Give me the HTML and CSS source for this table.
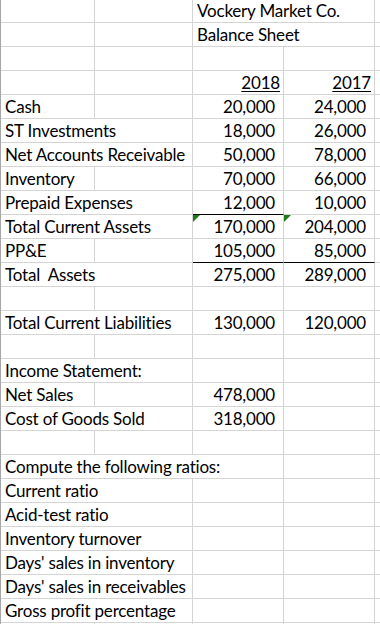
FILE: index.html
```html
<!DOCTYPE html>
<html>
<head>
<meta charset="utf-8">
<link rel="stylesheet" href="styles.css">
</head>
<body>
<div class="sheet">
  <div class="row"><div class="c"></div><div class="c"></div><div class="c s2">Vockery Market Co.</div><div class="c"></div></div>
  <div class="row"><div class="c"></div><div class="c"></div><div class="c s2">Balance Sheet</div><div class="c"></div></div>
  <div class="row"><div class="c"></div><div class="c"></div><div class="c"></div><div class="c"></div><div class="c"></div></div>
  <div class="row"><div class="c"></div><div class="c"></div><div class="c hd"><span class="u">2018</span></div><div class="c hd"><span class="u">2017</span></div><div class="c"></div></div>
  <div class="row"><div class="c">Cash</div><div class="c"></div><div class="c n">20,000</div><div class="c n">24,000</div><div class="c"></div></div>
  <div class="row"><div class="c s2">ST Investments</div><div class="c n">18,000</div><div class="c n">26,000</div><div class="c"></div></div>
  <div class="row"><div class="c s2">Net Accounts Receivable</div><div class="c n">50,000</div><div class="c n">78,000</div><div class="c"></div></div>
  <div class="row"><div class="c">Inventory</div><div class="c"></div><div class="c n">70,000</div><div class="c n">66,000</div><div class="c"></div></div>
  <div class="row"><div class="c s2">Prepaid Expenses</div><div class="c n bb">12,000</div><div class="c n">10,000</div><div class="c"></div></div>
  <div class="row"><div class="c s2">Total Current Assets</div><div class="c n tri">170,000</div><div class="c n tri">204,000</div><div class="c"></div></div>
  <div class="row"><div class="c">PP&amp;E</div><div class="c"></div><div class="c n bb">105,000</div><div class="c n bb">85,000</div><div class="c"></div></div>
  <div class="row"><div class="c s2">Total&nbsp; Assets</div><div class="c n">275,000</div><div class="c n">289,000</div><div class="c"></div></div>
  <div class="row"><div class="c"></div><div class="c"></div><div class="c"></div><div class="c"></div><div class="c"></div></div>
  <div class="row"><div class="c s2">Total Current Liabilities</div><div class="c n">130,000</div><div class="c n">120,000</div><div class="c"></div></div>
  <div class="row"><div class="c"></div><div class="c"></div><div class="c"></div><div class="c"></div><div class="c"></div></div>
  <div class="row"><div class="c s2">Income Statement:</div><div class="c"></div><div class="c"></div><div class="c"></div></div>
  <div class="row"><div class="c">Net Sales</div><div class="c"></div><div class="c n">478,000</div><div class="c"></div><div class="c"></div></div>
  <div class="row"><div class="c s2">Cost of Goods Sold</div><div class="c n">318,000</div><div class="c"></div><div class="c"></div></div>
  <div class="row"><div class="c"></div><div class="c"></div><div class="c"></div><div class="c"></div><div class="c"></div></div>
  <div class="row"><div class="c s3">Compute the following ratios:</div><div class="c"></div><div class="c"></div></div>
  <div class="row"><div class="c s2">Current ratio</div><div class="c"></div><div class="c"></div><div class="c"></div></div>
  <div class="row"><div class="c s2">Acid-test ratio</div><div class="c"></div><div class="c"></div><div class="c"></div></div>
  <div class="row"><div class="c s2">Inventory turnover</div><div class="c"></div><div class="c"></div><div class="c"></div></div>
  <div class="row"><div class="c s2">Days' sales in inventory</div><div class="c"></div><div class="c"></div><div class="c"></div></div>
  <div class="row"><div class="c s2">Days' sales in receivables</div><div class="c"></div><div class="c"></div><div class="c"></div></div>
  <div class="row"><div class="c s2">Gross profit percentage</div><div class="c"></div><div class="c"></div><div class="c"></div></div>
  <div class="row"><div class="c"></div><div class="c"></div><div class="c"></div><div class="c"></div><div class="c"></div></div>
</div>
</body>
</html>
```
FILE: styles.css
```css
html, body {
  margin: 0;
  padding: 0;
  background: #ffffff;
  overflow: hidden;
  width: 380px;
  height: 624px;
}

.sheet {
  margin-top: -1px;
  border-left: 1px solid #a6a6a6;
  font-family: Lato, "Liberation Sans", sans-serif;
  font-size: 17px;
  letter-spacing: -0.2px;
  font-variant-ligatures: none;
  color: #000000;
}

.row {
  display: grid;
  grid-template-columns: 94px 98px 91px 91px 1fr;
  height: 24px;
}

.c {
  box-sizing: border-box;
  height: 24px;
  border-right: 1px solid #d4d4d4;
  border-bottom: 1px solid #d4d4d4;
  line-height: 23px;
  padding: 0 4px;
  white-space: nowrap;
  overflow: visible;
  position: relative;
}

.s2 { grid-column: span 2; }
.s3 { grid-column: span 3; }

.n {
  text-align: right;
  padding-right: 8px;
}

.hd {
  text-align: right;
  padding-right: 3px;
}

.u {
  text-decoration: underline;
  text-decoration-thickness: 1px;
  text-underline-offset: 2px;
}

.bb {
  border-bottom-color: #000000;
}

.tri::before {
  content: "";
  position: absolute;
  left: 0;
  top: 0;
  width: 0;
  height: 0;
  border-top: 7px solid #1f7a1f;
  border-right: 7px solid transparent;
}
```
